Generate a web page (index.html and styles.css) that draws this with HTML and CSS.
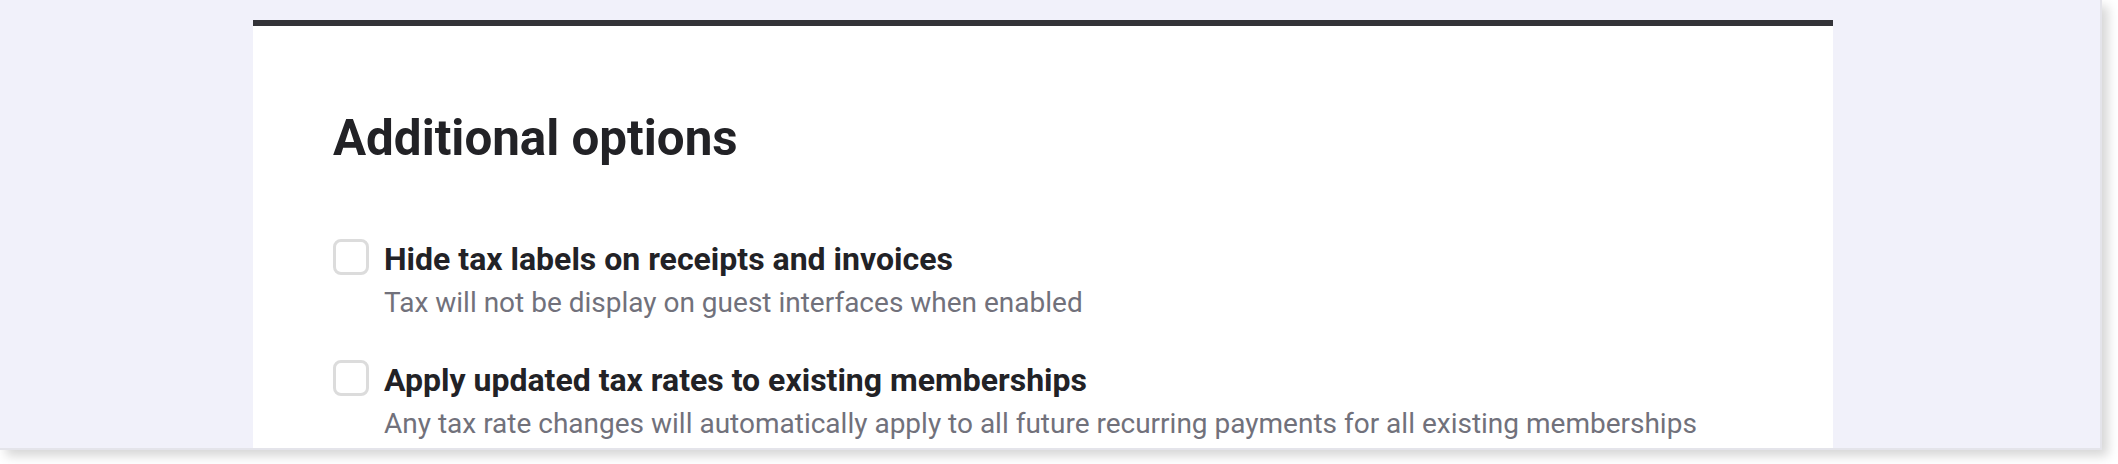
FILE: index.html
```html
<!DOCTYPE html>
<html lang="en">
<head>
<meta charset="utf-8">
<title>Additional options</title>
<link rel="stylesheet" href="styles.css">
</head>
<body>
<div class="window">
  <section class="card">
    <h1 class="title">Additional options</h1>
    <div class="options">
      <label class="option">
        <span class="checkbox"></span>
        <span class="option-text">
          <span class="option-label">Hide tax labels on receipts and invoices</span>
          <span class="option-desc">Tax will not be display on guest interfaces when enabled</span>
        </span>
      </label>
      <label class="option">
        <span class="checkbox"></span>
        <span class="option-text">
          <span class="option-label">Apply updated tax rates to existing memberships</span>
          <span class="option-desc">Any tax rate changes will automatically apply to all future recurring payments for all existing memberships</span>
        </span>
      </label>
    </div>
  </section>
</div>
</body>
</html>
```

FILE: styles.css
```css
html, body {
  margin: 0;
  padding: 0;
  background: #ffffff;
}

body {
  font-family: Roboto, "Liberation Sans", sans-serif;
  width: 2118px;
  height: 464px;
  overflow: hidden;
}

.window {
  box-sizing: border-box;
  width: 2102px;
  height: 450px;
  background: #f1f1fa;
  border-right: 2px solid #e4e4ea;
  border-bottom: 2px solid #e4e4ea;
  box-shadow: 6px 6px 10px rgba(0, 0, 0, 0.16);
  padding: 20px 0 0 253px;
  overflow: hidden;
}

.card {
  box-sizing: border-box;
  width: 1580px;
  min-height: 600px;
  background: #ffffff;
  border-top: 6px solid #333338;
  padding: 83px 80px 0;
}

.title {
  margin: 0;
  font-size: 49.3px;
  line-height: 58px;
  font-weight: 700;
  color: #222226;
}

.options {
  margin-top: 73px;
  display: flex;
  flex-direction: column;
  gap: 41px;
}

.option {
  display: flex;
  gap: 15px;
  align-items: flex-start;
}

.checkbox {
  box-sizing: border-box;
  flex: none;
  width: 36px;
  height: 36px;
  margin-top: -1px;
  border: 3px solid #dcdcdc;
  border-radius: 8px;
  background: #fff;
}

.option-text {
  display: flex;
  flex-direction: column;
}

.option-label {
  font-size: 32px;
  line-height: 38px;
  font-weight: 700;
  color: #222226;
}

.option-desc {
  margin-top: 8px;
  font-size: 28px;
  line-height: 34px;
  font-weight: 400;
  color: #71717b;
}
```
